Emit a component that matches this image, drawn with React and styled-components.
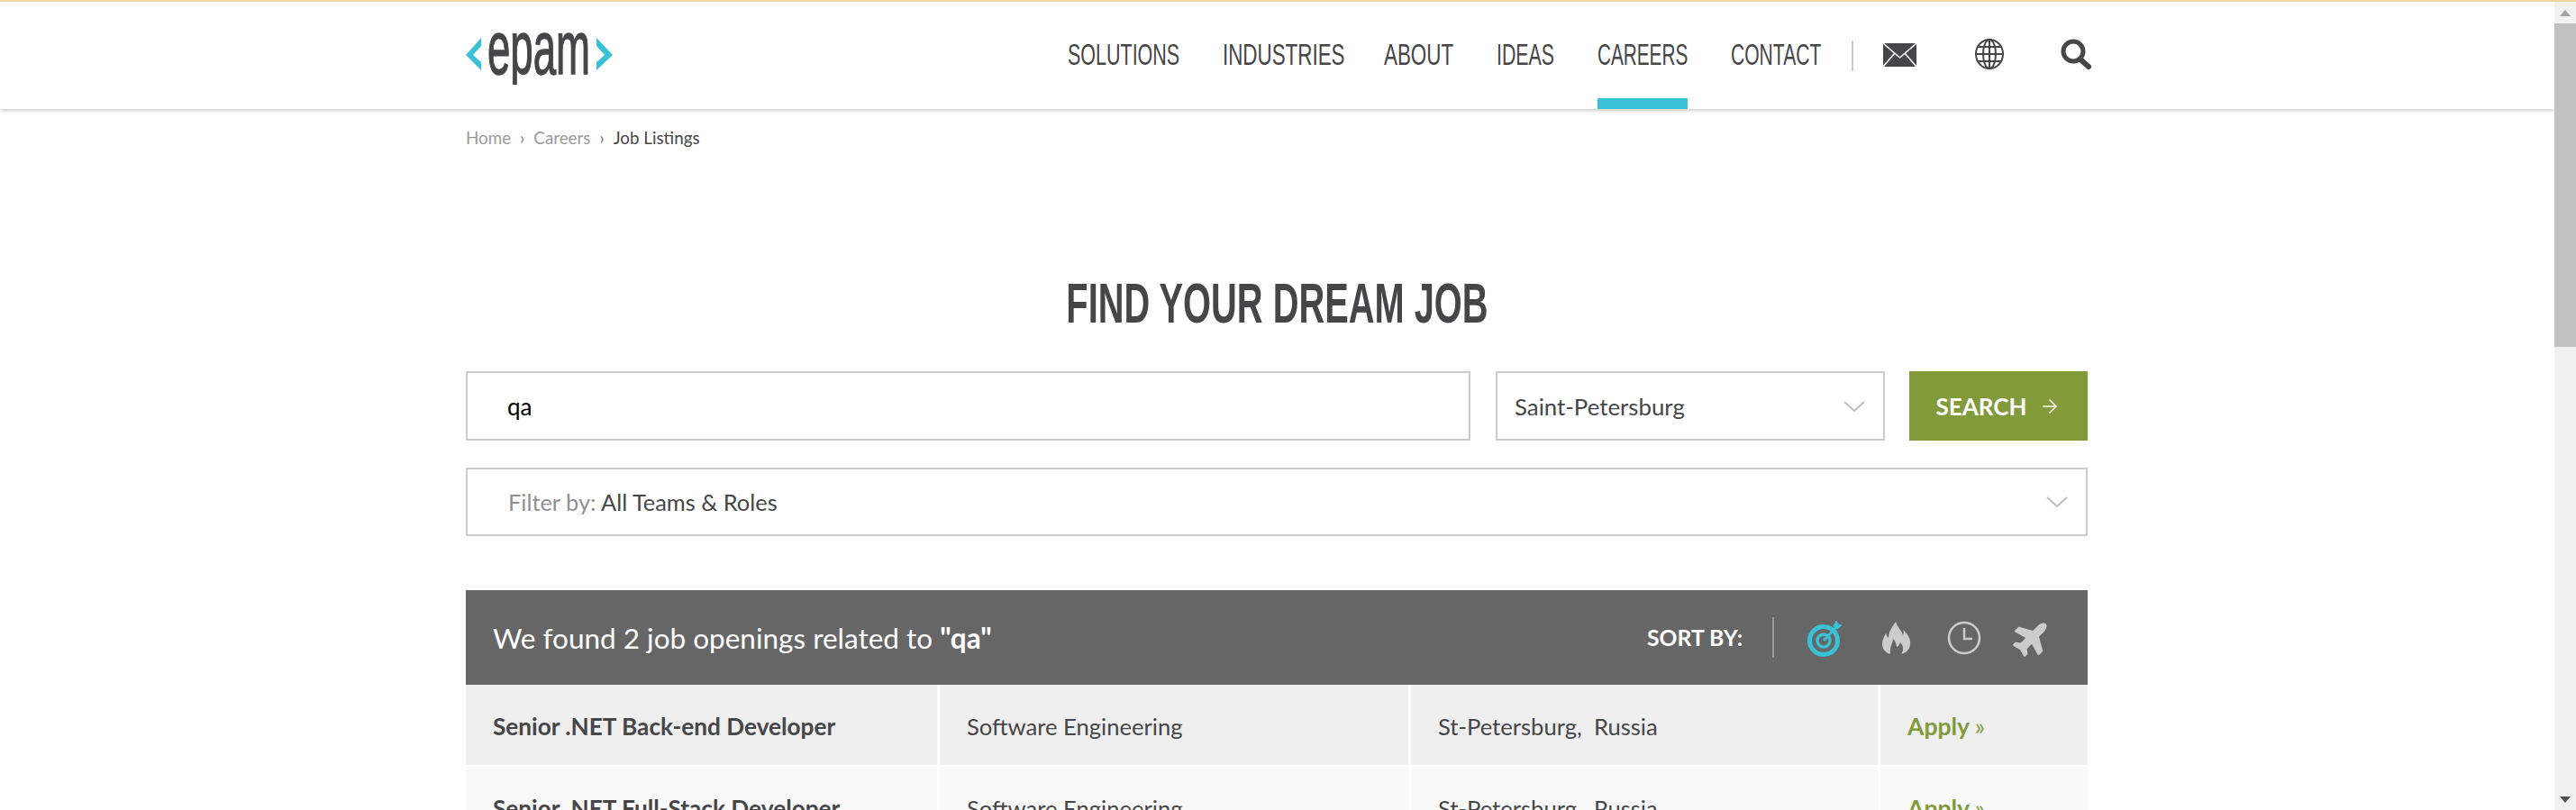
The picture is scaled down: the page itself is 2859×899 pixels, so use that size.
import React from 'react'
import styled, { createGlobalStyle } from 'styled-components'
import { FaPlane } from 'react-icons/fa'
import { ArrowRight } from 'lucide-react'

const GlobalStyle = createGlobalStyle`
  html, body {
    margin: 0;
    height: 899px;
    overflow: hidden;
    background: #fff;
    color: #464547;
    font-family: Lato, "Noto Sans", sans-serif;
  }
  * { box-sizing: border-box; }
`

// Oswald is not available, so Liberation Sans gets squeezed horizontally
const condensed = `"Liberation Sans", Arial, sans-serif`

const Stripe = styled.div`
  height: 2px;
  background: #efd79c;
`

const Shell = styled.div`
  display: flex;
  height: 897px;
`

const Main = styled.div`
  flex: 1;
  min-width: 0;
  overflow: hidden;
`

const Scrollbar = styled.div`
  width: 24px;
  background: #f1f1f1;
  display: flex;
  flex-direction: column;
  align-items: center;
`

const ScrollArrow = styled.div`
  height: 24px;
  width: 100%;
  display: flex;
  align-items: center;
  justify-content: center;
  margin-top: ${({ $down }) => ($down ? 'auto' : '0')};
  &::before {
    content: '';
    border-left: 6px solid transparent;
    border-right: 6px solid transparent;
    border-${({ $down }) => ($down ? 'top' : 'bottom')}: 7px solid ${({ $down }) => ($down ? '#505050' : '#a3a3a3')};
  }
`

const ScrollThumb = styled.div`
  width: 100%;
  height: 359px;
  background: #c1c1c1;
`

const Header = styled.header`
  height: 119px;
  background: #fff;
  box-shadow: 0 2px 4px rgba(0, 0, 0, 0.2);
  position: relative;
`

const Wrap = styled.div`
  width: 1800px;
  margin-left: 517px;
`

const HeaderRow = styled(Wrap)`
  height: 119px;
  display: flex;
  justify-content: space-between;
  align-items: stretch;
`

const Logo = styled.svg`
  width: 164px;
  height: 60px;
  margin-top: 32px;
`

const Nav = styled.nav`
  display: flex;
  align-items: stretch;
  margin-right: -5px;
`

const NavItem = styled.a`
  width: ${({ $w }) => $w}px;
  height: 119px;
  margin-right: 48px;
  border-bottom: 12px solid ${({ $active }) => ($active ? '#39c2d7' : 'transparent')};
  font-family: ${condensed};
  font-size: 34px;
  line-height: 117px;
  color: #464547;
  white-space: nowrap;
`

const NavLabel = styled.span`
  display: inline-block;
  transform: scaleX(${({ $sx }) => $sx});
  transform-origin: left center;
`

const NavDivider = styled.span`
  width: 2px;
  height: 34px;
  margin: 43px 33px 0 -16px;
  background: #ccc;
`

const NavIcon = styled.svg`
  margin-top: ${({ $top }) => $top}px;
  margin-right: ${({ $gap }) => $gap}px;
  width: ${({ $w }) => $w}px;
  height: ${({ $h }) => $h}px;
  color: #464547;
`

const Breadcrumbs = styled(Wrap)`
  height: 61px;
  display: flex;
  align-items: center;
  font-size: 18.8px;
  padding-top: 2px;
`

const Crumb = styled.span`
  color: ${({ $current }) => ($current ? '#464547' : '#9c9a98')};
`

const CrumbSep = styled.span`
  margin: 0 10px;
  color: #777;
`

const Title = styled.h1`
  margin: 0;
  padding-top: 118px;
  height: 230px;
  font-family: ${condensed};
  font-weight: 700;
  font-size: 63px;
  line-height: 72px;
  text-align: center;
  color: #464547;
  white-space: nowrap;
`

const TitleText = styled.span`
  display: inline-block;
  transform: scaleX(0.632);
`

const SearchRow = styled(Wrap)`
  display: flex;
  height: 77px;
`

const Field = styled.div`
  height: ${({ $h }) => $h || 77}px;
  border: 2px solid #ccc;
  display: flex;
  align-items: center;
  justify-content: space-between;
  font-size: 25.8px;
  padding: 0 20px 0 ${({ $pad }) => $pad}px;
  background: #fff;
`

const QueryInput = styled.input`
  width: 1115px;
  height: 77px;
  border: 2px solid #ccc;
  padding: 0 0 0 44px;
  outline: none;
  font-family: inherit;
  font-size: 26px;
  color: #000;
`

const LocationField = styled(Field)`
  width: 432px;
  margin-left: 28px;
`

const SearchButton = styled.button`
  width: 198px;
  height: 77px;
  margin-left: 27px;
  border: 0;
  background: #819a3a;
  color: #fff;
  font-family: inherit;
  font-weight: 700;
  font-size: 26px;
  display: flex;
  align-items: center;
  justify-content: center;
  gap: 14px;
`

const FilterField = styled(Field)`
  margin-top: 30px;
  font-size: 25.4px;
`

const Muted = styled.span`
  color: #8f8f92;
`

const Chevron = styled.svg`
  width: 24px;
  height: 12px;
  fill: none;
  stroke: #bdbdbd;
  stroke-width: 2;
`

const ResultsBar = styled(Wrap)`
  height: 105px;
  margin-top: 60px;
  background: #666;
  color: #fff;
  padding: 0 40px 0 30px;
  display: flex;
  align-items: center;
  justify-content: space-between;
  font-size: 31.5px;
`

const Sort = styled.div`
  display: flex;
  align-items: center;
`

const SortLabel = styled.span`
  font-size: 24.7px;
  font-weight: 700;
`

const SortDivider = styled.span`
  width: 2px;
  height: 45px;
  background: #999;
  margin: 0 37px 0 33px;
`

const SortIcon = styled.span`
  width: ${({ $w }) => $w}px;
  margin-right: ${({ $gap }) => $gap}px;
  display: flex;
  color: ${({ $active }) => ($active ? '#39c2d7' : '#ccc')};
  &:last-child { margin-right: 0; }
`

const JobRow = styled(Wrap)`
  display: grid;
  grid-template-columns: 523px 520px 518px 230px;
  gap: 3px;
  height: 89px;
  margin-bottom: 2px;
`

const JobCell = styled.div`
  background: ${({ $alt }) => ($alt ? '#f9f9f9' : '#efefef')};
  padding: 2px 0 0 30px;
  display: flex;
  align-items: center;
  font-size: ${({ $bold }) => ($bold ? 26.2 : 25.6)}px;
  font-weight: ${({ $bold }) => ($bold ? 700 : 400)};
  white-space: pre;
`

const ApplyLink = styled.a`
  color: #819a3a;
  font-weight: 700;
  font-size: 26.5px;
  & span { font-weight: 400; }
`

const jobs = [
  { title: 'Senior .NET Back-end Developer' },
  { title: 'Senior .NET Full-Stack Developer', alt: true },
]

const navLinks = [
  { label: 'SOLUTIONS', w: 124, sx: 0.632 },
  { label: 'INDUSTRIES', w: 131, sx: 0.658 },
  { label: 'ABOUT', w: 77, sx: 0.658 },
  { label: 'IDEAS', w: 64, sx: 0.627 },
  { label: 'CAREERS', w: 100, sx: 0.61 },
  { label: 'CONTACT', w: 102, sx: 0.62 },
]

const ChevronDown = () => (
  <Chevron viewBox="0 0 24 12">
    <polyline points="1,1 12,11 23,1" />
  </Chevron>
)

const App = () => (
  <>
    <GlobalStyle />
    <Stripe />
    <Shell>
      <Main>
        <Header>
          <HeaderRow>
            <Logo viewBox="0 0 164 60">
              <path d="M17 8 L0 27 L17 44 L17 35 L8 27 L17 17 Z" fill="#39c2d7" />
              <path d="M145 8 L163 27 L145 44 L145 35 L154 27 L145 17 Z" fill="#39c2d7" />
              <text x="24" y="48" textLength="114" lengthAdjust="spacingAndGlyphs" fontFamily={condensed} fontSize="84" fill="#464547" stroke="#464547" strokeWidth="1.5">epam</text>
            </Logo>
            <Nav>
              {navLinks.map(link => (
                <NavItem key={link.label} $w={link.w} $active={link.label === 'CAREERS'}>
                  <NavLabel $sx={link.sx}>{link.label}</NavLabel>
                </NavItem>
              ))}
              <NavDivider />
              <NavIcon $top={46} $gap={65} $w={37} $h={26} viewBox="0 0 37 26">
                <rect width="37" height="26" fill="currentColor" />
                <path d="M0 0 L18.5 16 L37 0 M0 26 L13 11 M37 26 L24 11" fill="none" stroke="#fff" strokeWidth="1.5" />
              </NavIcon>
              <NavIcon $top={41} $gap={63} $w={32} $h={34} viewBox="0 0 32 34" fill="none" stroke="currentColor" strokeWidth="2">
                <ellipse cx="16" cy="17" rx="15" ry="16" />
                <ellipse cx="16" cy="17" rx="7" ry="16" />
                <path d="M16 1 V33 M1 17 H31 M3 9 H29 M3 25 H29" />
              </NavIcon>
              <NavIcon $top={41} $gap={0} $w={35} $h={34} viewBox="0 0 35 34" fill="none" stroke="currentColor">
                <circle cx="14" cy="14" r="11" strokeWidth="5" />
                <path d="M22 23 L31 31" strokeWidth="6" strokeLinecap="round" />
              </NavIcon>
            </Nav>
          </HeaderRow>
        </Header>
        <Breadcrumbs>
          <Crumb>Home</Crumb>
          <CrumbSep>›</CrumbSep>
          <Crumb>Careers</Crumb>
          <CrumbSep>›</CrumbSep>
          <Crumb $current>Job Listings</Crumb>
        </Breadcrumbs>
        <Title><TitleText>FIND YOUR DREAM JOB</TitleText></Title>
        <SearchRow>
          <QueryInput value="qa" readOnly />
          <LocationField $pad={19}>
            Saint-Petersburg
            <ChevronDown />
          </LocationField>
          <SearchButton>
            SEARCH
            <ArrowRight size={24} strokeWidth={1.5} />
          </SearchButton>
        </SearchRow>
        <Wrap>
          <FilterField $h={76} $pad={45}>
            <span><Muted>Filter by:</Muted> All Teams &amp; Roles</span>
            <ChevronDown />
          </FilterField>
        </Wrap>
        <ResultsBar>
          <span>We found 2 job openings related to <b>"qa"</b></span>
          <Sort>
            <SortLabel>SORT BY:</SortLabel>
            <SortDivider />
            <SortIcon $active $w={38} $gap={44}>
              <svg width="38" height="42" viewBox="0 0 38 42" fill="none" stroke="currentColor">
                <circle cx="18" cy="24" r="15.5" strokeWidth="5" />
                <circle cx="18" cy="24" r="7" strokeWidth="3.5" />
                <path d="M18 24 L33 8" strokeWidth="3" />
                <path d="M29 8 L32 2 L34 6 L38 7 L33 11 Z" fill="currentColor" strokeWidth="1" />
              </svg>
            </SortIcon>
            <SortIcon $w={34} $gap={39}>
              <svg width="34" height="36" viewBox="0 0 34 36" fill="currentColor">
                <path d="M16 0 C18 7 23 10 24 15 C25 13 25 11 24 9 C30 14 33 20 32 26 C31 32 26 35 22 36 C25 32 25 27 21 23 C20 26 19 27 17 28 C17 24 15 21 13 19 C13 24 9 27 10 36 C4 34 1 30 1 25 C1 20 3 17 5 13 C6 16 7 17 8 18 C8 11 12 6 16 0 Z" />
              </svg>
            </SortIcon>
            <SortIcon $w={38} $gap={35}>
              <svg width="38" height="38" viewBox="0 0 38 38" fill="none" stroke="currentColor" strokeWidth="2.5">
                <circle cx="19" cy="19" r="17" />
                <path d="M19 8 V20 H28" />
              </svg>
            </SortIcon>
            <SortIcon $w={43} $gap={0}><FaPlane size={43} style={{ transform: 'rotate(-45deg)' }} /></SortIcon>
          </Sort>
        </ResultsBar>
        {jobs.map(job => (
          <JobRow key={job.title}>
            <JobCell $alt={job.alt} $bold>{job.title}</JobCell>
            <JobCell $alt={job.alt}>Software Engineering</JobCell>
            <JobCell $alt={job.alt}>{'St-Petersburg,  Russia'}</JobCell>
            <JobCell $alt={job.alt}>
              <ApplyLink>Apply <span>»</span></ApplyLink>
            </JobCell>
          </JobRow>
        ))}
      </Main>
      <Scrollbar>
        <ScrollArrow />
        <ScrollThumb />
        <ScrollArrow $down />
      </Scrollbar>
    </Shell>
  </>
)

export default App
